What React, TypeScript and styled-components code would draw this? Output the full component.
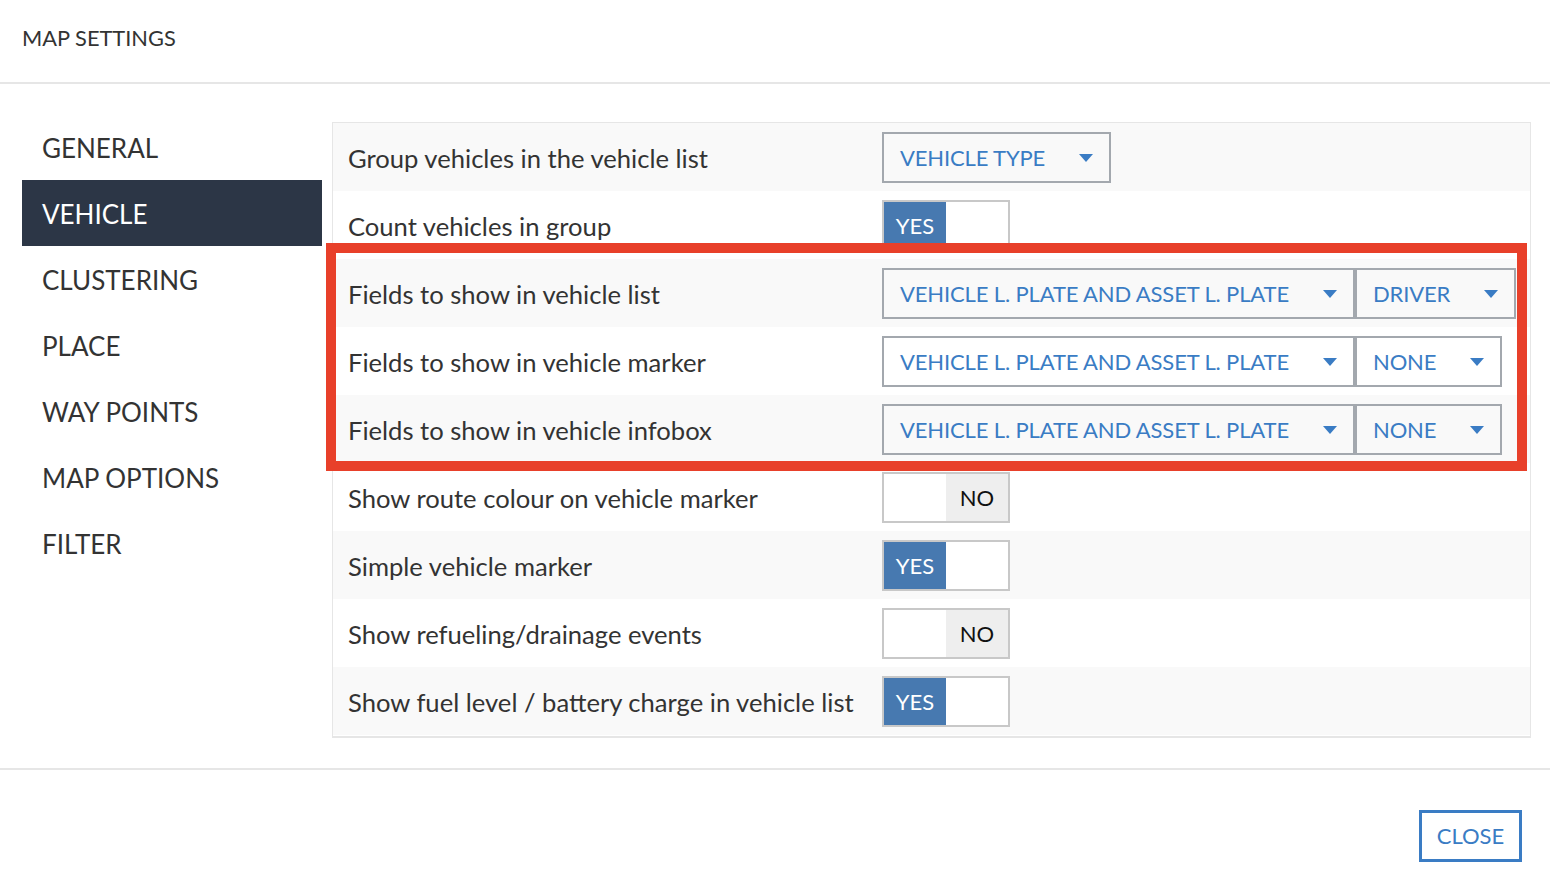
import React from "react";
import styled, { createGlobalStyle } from "styled-components";

const GlobalStyle = createGlobalStyle`
  html, body {
    margin: 0;
    padding: 0;
    background: #ffffff;
    font-family: Lato, "Open Sans", "Liberation Sans", sans-serif;
    color: #333333;
  }
  * { box-sizing: border-box; }
`;

const Dialog = styled.div`
  width: 1550px;
  height: 884px;
  display: flex;
  flex-direction: column;
  background: #fff;
  position: relative;
  overflow: hidden;
`;

const Header = styled.div`
  height: 84px;
  padding: 0 0 8px 22px;
  display: flex;
  align-items: center;
  border-bottom: 2px solid #e6e6e6;
  font-size: 21.8px;
  color: #333;
`;

const Body = styled.div`
  display: flex;
  padding: 38px 19px 30px 22px;
  gap: 10px;
  border-bottom: 2px solid #e6e6e6;
  position: relative;
`;

const Sidebar = styled.nav`
  width: 300px;
  flex-shrink: 0;
  display: flex;
  flex-direction: column;
  margin-top: -8px;
`;

const NavItem = styled.div<{ $active?: boolean }>`
  height: 66px;
  display: flex;
  align-items: center;
  padding-left: 20px;
  padding-top: 2px;
  font-size: 26px;
  background: ${(p) => (p.$active ? "#2c3646" : "transparent")};
  color: ${(p) => (p.$active ? "#ffffff" : "#333333")};
`;

const Panel = styled.div`
  flex: 1;
  border: 1px solid #e6e6e6;
  border-bottom-width: 2px;
  display: flex;
  flex-direction: column;
  padding-bottom: 1px;
`;

const Row = styled.div<{ $shade: boolean }>`
  height: 68px;
  display: grid;
  grid-template-columns: 534px 1fr;
  align-items: center;
  padding-left: 15px;
  background: ${(p) => (p.$shade ? "#f9f9f9" : "#ffffff")};
`;

const Label = styled.div`
  font-size: 25.6px;
  color: #333;
  white-space: nowrap;
  padding-top: 2px;
`;

const Controls = styled.div`
  display: flex;
  align-items: center;
`;

const Select = styled.div`
  height: 51px;
  display: inline-flex;
  align-items: center;
  border: 2px solid #a3a8ae;
  padding: 0 16px;
  font-size: 22px;
  letter-spacing: -0.14px;
  color: #3a7cc4;
  white-space: nowrap;
`;

const Caret = styled.span`
  display: inline-block;
  margin-left: 34px;
  width: 0;
  height: 0;
  border-left: 7.5px solid transparent;
  border-right: 7.5px solid transparent;
  border-top: 8px solid #3a7cc4;
  margin-top: 2px;
`;

const Toggle = styled.div`
  width: 128px;
  height: 51px;
  border: 2px solid #c8c8c8;
  display: grid;
  grid-template-columns: 62px 62px;
  background: #ffffff;
`;

const ToggleHalf = styled.div<{ $kind: "yes" | "no" | "blank" }>`
  display: flex;
  align-items: center;
  justify-content: center;
  font-size: 22px;
  background: ${(p) =>
    p.$kind === "yes" ? "#4779b0" : p.$kind === "no" ? "#eeeeee" : "#ffffff"};
  color: ${(p) => (p.$kind === "yes" ? "#ffffff" : "#111111")};
`;

const Highlight = styled.div`
  position: absolute;
  left: 326px;
  top: 243px;
  width: 1201px;
  height: 228px;
  border: 10px solid #e8402a;
  pointer-events: none;
`;

const Footer = styled.div`
  flex: 1;
  display: flex;
  justify-content: flex-end;
  align-items: flex-start;
  padding: 40px 28px 0 0;
`;

const CloseButton = styled.button`
  width: 103px;
  height: 52px;
  border: 3px solid #3a7cc4;
  background: #ffffff;
  color: #3a7cc4;
  font-family: inherit;
  font-size: 22px;
  padding: 0 0 2px;
  cursor: pointer;
`;

type Setting =
  | { label: string; kind: "select"; options: string[] }
  | { label: string; kind: "toggle"; on: boolean };

const settings: Setting[] = [
  { label: "Group vehicles in the vehicle list", kind: "select", options: ["VEHICLE TYPE"] },
  { label: "Count vehicles in group", kind: "toggle", on: true },
  {
    label: "Fields to show in vehicle list",
    kind: "select",
    options: ["VEHICLE L. PLATE AND ASSET L. PLATE", "DRIVER"],
  },
  {
    label: "Fields to show in vehicle marker",
    kind: "select",
    options: ["VEHICLE L. PLATE AND ASSET L. PLATE", "NONE"],
  },
  {
    label: "Fields to show in vehicle infobox",
    kind: "select",
    options: ["VEHICLE L. PLATE AND ASSET L. PLATE", "NONE"],
  },
  { label: "Show route colour on vehicle marker", kind: "toggle", on: false },
  { label: "Simple vehicle marker", kind: "toggle", on: true },
  { label: "Show refueling/drainage events", kind: "toggle", on: false },
  { label: "Show fuel level / battery charge in vehicle list", kind: "toggle", on: true },
];

const navItems = ["GENERAL", "VEHICLE", "CLUSTERING", "PLACE", "WAY POINTS", "MAP OPTIONS", "FILTER"];

export default function App() {
  return (
    <>
      <GlobalStyle />
      <Dialog>
        <Header>MAP SETTINGS</Header>
        <Body>
          <Sidebar>
            {navItems.map((n) => (
              <NavItem key={n} $active={n === "VEHICLE"}>
                {n}
              </NavItem>
            ))}
          </Sidebar>
          <Panel>
            {settings.map((s, i) => (
              <Row key={s.label} $shade={i % 2 === 0}>
                <Label>{s.label}</Label>
                <Controls>
                  {s.kind === "select" ? (
                    s.options.map((o, j) => (
                      <Select key={j}>
                        {o}
                        <Caret />
                      </Select>
                    ))
                  ) : (
                    <Toggle>
                      <ToggleHalf $kind={s.on ? "yes" : "blank"}>{s.on ? "YES" : ""}</ToggleHalf>
                      <ToggleHalf $kind={s.on ? "blank" : "no"}>{s.on ? "" : "NO"}</ToggleHalf>
                    </Toggle>
                  )}
                </Controls>
              </Row>
            ))}
          </Panel>
        </Body>
        <Highlight />
        <Footer>
          <CloseButton>CLOSE</CloseButton>
        </Footer>
      </Dialog>
    </>
  );
}
